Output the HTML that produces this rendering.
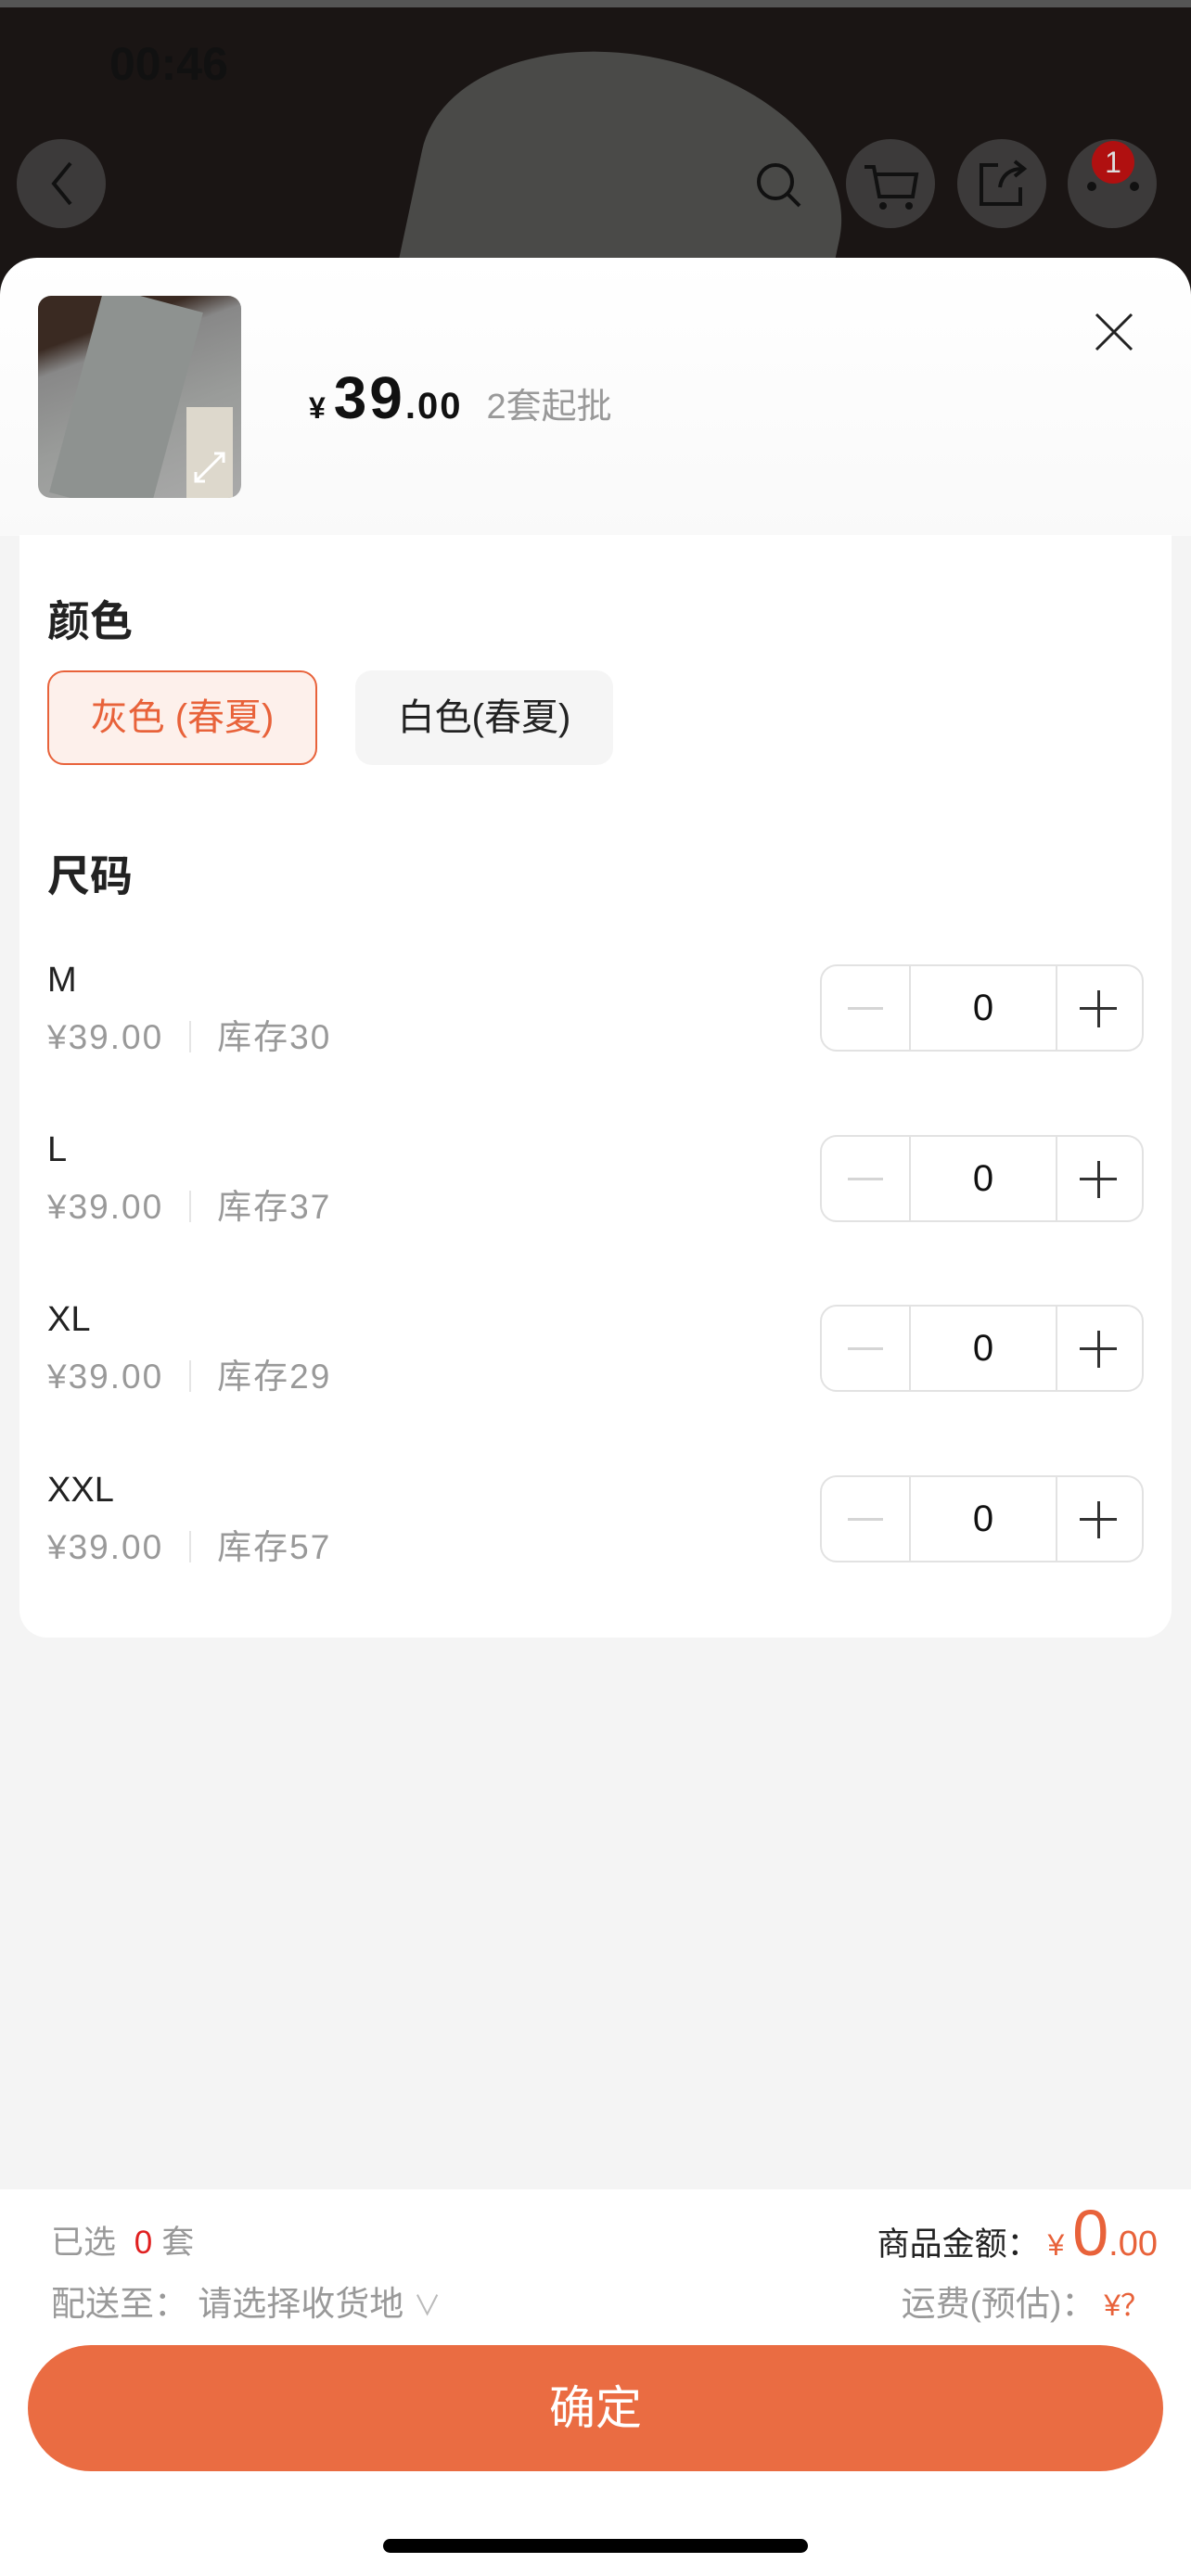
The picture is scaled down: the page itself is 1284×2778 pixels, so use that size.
<!DOCTYPE html>
<html><head><meta charset="utf-8"><style>
*{margin:0;padding:0;box-sizing:border-box}
body{width:1284px;height:2778px;position:relative;overflow:hidden;background:#f4f4f4;font-family:"Liberation Sans","Noto Sans CJK SC",sans-serif}
.a{position:absolute}
.top{left:0;top:0;width:1284px;height:320px;background:#1a1514}
.circ{width:96px;height:96px;border-radius:50%;background:rgba(90,90,90,.55)}
.card{left:21px;top:577px;width:1242px;height:1189px;background:#fff;border-radius:0 0 30px 30px}
.h{font-size:46px;font-weight:bold;color:#222}
.sz{font-size:38px;color:#222}
.pr{font-size:37px;color:#999;letter-spacing:2px}
.step{left:884px;width:349px;height:94px;border:2px solid #e2e2e2;border-radius:18px;background:#fff}
.step .d1{position:absolute;left:94px;top:0;width:2px;height:100%;background:#e2e2e2}
.step .d2{position:absolute;left:252px;top:0;width:2px;height:100%;background:#e2e2e2}
.step .n{position:absolute;left:96px;width:156px;top:0;line-height:90px;text-align:center;font-size:40px;color:#111}
.step .m{position:absolute;left:28px;top:44px;width:38px;height:3px;background:#d5d5d5}
.step .p1{position:absolute;left:278px;top:44px;width:40px;height:3px;background:#333}
.step .p2{position:absolute;left:296.5px;top:26px;width:3px;height:40px;background:#333}
</style></head><body>
<div class="a top">
  <div class="a" style="left:450px;top:60px;width:460px;height:300px;border-radius:50% 50% 0 0;background:#4a4a48;transform:rotate(12deg)"></div>
  <div class="a" style="left:0;top:0;width:1284px;height:8px;background:#555"></div>
  <div class="a" style="left:118px;top:40px;font-size:50px;font-weight:bold;color:#111">00:46</div>
  <div class="a circ" style="left:18px;top:150px"></div>
  <svg class="a" style="left:18px;top:150px" width="96" height="96"><path d="M58 26 L40 48 L58 70" stroke="#111" stroke-width="4" fill="none"/></svg>
  <svg class="a" style="left:800px;top:160px" width="80" height="80"><circle cx="36" cy="36" r="18" stroke="#111" stroke-width="4" fill="none"/><path d="M49 49 L62 62" stroke="#111" stroke-width="4"/></svg>
  <div class="a circ" style="left:912px;top:150px"></div>
  <svg class="a" style="left:912px;top:150px" width="96" height="96"><path d="M20 30 L30 30 L36 62 L72 62 L76 38 L32 38" stroke="#111" stroke-width="4" fill="none"/><circle cx="40" cy="72" r="4" fill="#111"/><circle cx="68" cy="72" r="4" fill="#111"/></svg>
  <div class="a circ" style="left:1032px;top:150px"></div>
  <svg class="a" style="left:1032px;top:150px" width="96" height="96"><path d="M44 28 L26 28 L26 70 L68 70 L68 52 M46 52 C48 38 58 32 70 32 M62 24 L72 32 L62 40" stroke="#111" stroke-width="4" fill="none"/></svg>
  <div class="a circ" style="left:1151px;top:150px"></div>
  <div class="a" style="left:1172px;top:196px;width:10px;height:10px;border-radius:50%;background:#111"></div>
  <div class="a" style="left:1218px;top:196px;width:10px;height:10px;border-radius:50%;background:#111"></div>
  <div class="a" style="left:1177px;top:152px;width:46px;height:46px;border-radius:50%;background:#b01010;color:#ddd;font-size:32px;text-align:center;line-height:46px">1</div>
</div>
<div class="a" style="left:0;top:278px;width:1284px;height:300px;background:linear-gradient(#fff,#f9f9f9);border-radius:40px 40px 0 0"></div>
<div class="a" style="left:41px;top:319px;width:219px;height:218px;border-radius:14px;overflow:hidden;background:linear-gradient(160deg,#3a2a22 0%,#3a2a22 20%,#888 30%,#9a9c9a 60%,#aaa 100%)">
  <div class="a" style="left:40px;top:0;width:110px;height:230px;background:#8e9290;transform:rotate(15deg)"></div>
  <div class="a" style="left:160px;top:120px;width:50px;height:100px;background:#ddd8cc"></div>
  <svg class="a" style="left:160px;top:160px" width="50" height="50"><path d="M10 40 L40 10 M30 10 L40 10 L40 20 M10 30 L10 40 L20 40" stroke="#fff" stroke-width="3" fill="none"/></svg>
</div>
<div class="a" style="left:333px;top:392px;color:#111;white-space:nowrap"><span style="font-size:32px;font-weight:bold">¥ </span><span style="font-size:64px;font-weight:bold;letter-spacing:3px">39</span><span style="font-size:40px;font-weight:bold;letter-spacing:2px">.00</span><span style="font-size:38px;color:#999;margin-left:26px">2套起批</span></div>
<svg class="a" style="left:1180px;top:337px" width="42" height="42"><path d="M2 2 L40 40 M40 2 L2 40" stroke="#222" stroke-width="3"/></svg>
<div class="a card"></div>
<div class="a h" style="left:51px;top:634px">颜色</div>
<div class="a" style="left:51px;top:723px;width:291px;height:102px;border:2px solid #e8623a;border-radius:18px;background:#fdf0eb;color:#e8623a;font-size:40px;line-height:98px;text-align:center">灰色 (春夏)</div>
<div class="a" style="left:383px;top:723px;width:278px;height:102px;border-radius:18px;background:#f5f5f5;color:#222;font-size:40px;line-height:102px;text-align:center">白色(春夏)</div>
<div class="a h" style="left:51px;top:909px">尺码</div>

<div class="a sz" style="left:51px;top:1036px">M</div>
<div class="a pr" style="left:51px;top:1088px">¥39.00<span style="display:inline-block;width:2px;height:34px;background:#e5e5e5;margin:0 28px;vertical-align:-4px"></span>库存30</div>
<div class="a step" style="top:1040px"><div class="d1"></div><div class="d2"></div><div class="m"></div><div class="n">0</div><div class="p1"></div><div class="p2"></div></div>

<div class="a sz" style="left:51px;top:1219px">L</div>
<div class="a pr" style="left:51px;top:1271px">¥39.00<span style="display:inline-block;width:2px;height:34px;background:#e5e5e5;margin:0 28px;vertical-align:-4px"></span>库存37</div>
<div class="a step" style="top:1224px"><div class="d1"></div><div class="d2"></div><div class="m"></div><div class="n">0</div><div class="p1"></div><div class="p2"></div></div>

<div class="a sz" style="left:51px;top:1402px">XL</div>
<div class="a pr" style="left:51px;top:1454px">¥39.00<span style="display:inline-block;width:2px;height:34px;background:#e5e5e5;margin:0 28px;vertical-align:-4px"></span>库存29</div>
<div class="a step" style="top:1407px"><div class="d1"></div><div class="d2"></div><div class="m"></div><div class="n">0</div><div class="p1"></div><div class="p2"></div></div>

<div class="a sz" style="left:51px;top:1586px">XXL</div>
<div class="a pr" style="left:51px;top:1638px">¥39.00<span style="display:inline-block;width:2px;height:34px;background:#e5e5e5;margin:0 28px;vertical-align:-4px"></span>库存57</div>
<div class="a step" style="top:1591px"><div class="d1"></div><div class="d2"></div><div class="m"></div><div class="n">0</div><div class="p1"></div><div class="p2"></div></div>

<div class="a" style="left:0;top:2361px;width:1284px;height:417px;background:#fff"></div>
<div class="a" style="left:55px;top:2390px;font-size:35px;color:#999">已选 <span style="color:#e02020;margin:0 10px">0</span>套</div>
<div class="a" style="left:55px;top:2454px;font-size:37px;color:#999">配送至：&nbsp;请选择收货地 <span style="font-size:30px;color:#bbb">∨</span></div>
<div class="a" style="right:36px;top:2368px;font-size:35px;color:#222;white-space:nowrap">商品金额：<span style="color:#e8623a;font-size:32px"> ¥ </span><span style="color:#e8623a;font-size:70px">0</span><span style="color:#e8623a;font-size:38px">.00</span></div>
<div class="a" style="right:44px;top:2454px;font-size:37px;color:#999;white-space:nowrap">运费(预估)：<span style="color:#e8623a;font-size:32px"> ¥？</span></div>
<div class="a" style="left:30px;top:2529px;width:1224px;height:136px;border-radius:68px;background:#ea6c42;color:#fff;font-size:50px;text-align:center;line-height:136px">确定</div>
<div class="a" style="left:413px;top:2738px;width:458px;height:15px;border-radius:8px;background:#000"></div>
</body></html>
